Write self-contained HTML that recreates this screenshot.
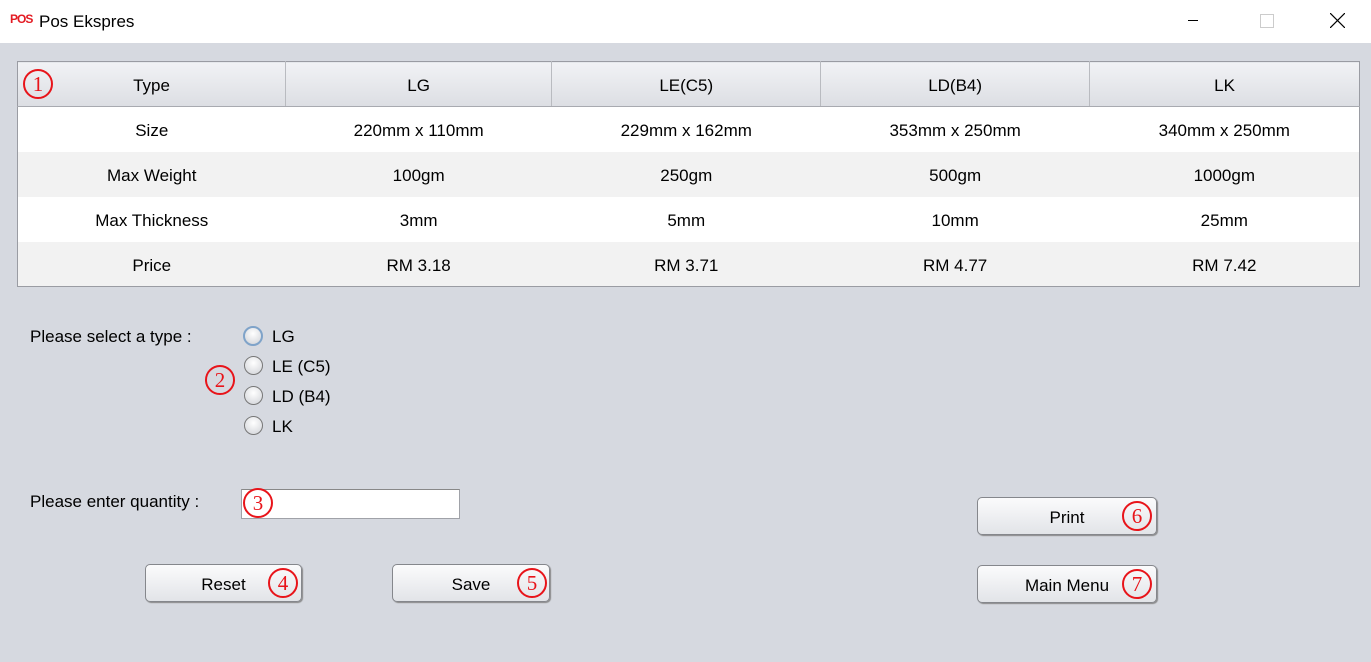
<!DOCTYPE html>
<html><head><style>
body{margin:0;width:1371px;height:662px;background:#d6d9e0;font-family:"Liberation Sans",sans-serif;position:relative;overflow:hidden;font-size:17px;color:#000}
.title{position:absolute;left:0;top:0;width:1371px;height:43px;background:#fff}
.abs{position:absolute}
table{position:absolute;left:17px;top:61px;border-collapse:collapse;border:1px solid #9a9ca3;width:1343px;background:#fff}
td,th{text-align:center;font-weight:normal;height:45px;padding:4px 0 0 0;font-size:17px;box-sizing:border-box}
th{background:linear-gradient(#f1f2f5,#dcdee3);border-right:1px solid #b9bbc0;border-bottom:1px solid #a8aab0;height:45px;padding-top:3px}
tr:nth-child(odd) td{background:#f2f2f2}
.circ{position:absolute;width:26px;height:26px;border:2px solid #e8141a;border-radius:50%;color:#e8141a;font-family:"Liberation Serif",serif;font-size:21px;text-align:center;line-height:27px}
.radio{position:absolute;left:244px;width:17px;height:17px;border-radius:50%;border:1px solid #777;background:radial-gradient(circle at 50% 35%,#fff,#cfd1d6)}
.rl{position:absolute;left:272px}
.btn{position:absolute;border:1px solid #85878c;border-radius:5px;background:linear-gradient(#fbfbfc,#e2e4e8);box-shadow:1px 1px 1px #888;text-align:center;line-height:40px;box-sizing:border-box}
</style></head><body>
<div class="title">
 <div class="abs" style="left:10px;top:12px;color:#e31b23;font-weight:bold;font-size:12px;letter-spacing:-1px">POS</div>
 <div class="abs" style="left:39px;top:12px;font-size:17px">Pos Ekspres</div>
 <div class="abs" style="left:1188px;top:20px;width:10px;height:1px;background:#000"></div>
 <div class="abs" style="left:1260px;top:14px;width:12px;height:12px;border:1px solid #ccc"></div>
 <svg class="abs" style="left:1330px;top:13px" width="15" height="15"><path d="M0 0L15 15M15 0L0 15" stroke="#000" stroke-width="1.2"/></svg>
</div>
<table>
<tr><th style="width:268px">Type</th><th>LG</th><th>LE(C5)</th><th>LD(B4)</th><th style="border-right:0">LK</th></tr>
<tr><td>Size</td><td>220mm x 110mm</td><td>229mm x 162mm</td><td>353mm x 250mm</td><td>340mm x 250mm</td></tr>
<tr><td>Max Weight</td><td>100gm</td><td>250gm</td><td>500gm</td><td>1000gm</td></tr>
<tr><td>Max Thickness</td><td>3mm</td><td>5mm</td><td>10mm</td><td>25mm</td></tr>
<tr><td>Price</td><td>RM 3.18</td><td>RM 3.71</td><td>RM 4.77</td><td>RM 7.42</td></tr>
</table>
<div class="circ" style="left:23px;top:69px">1</div>
<div class="abs" style="left:30px;top:327px">Please select a type :</div>
<div class="radio" style="top:326px;border:2px solid #7fa3c9;width:16px;height:16px;left:243px"></div><div class="rl" style="top:327px">LG</div>
<div class="radio" style="top:356px"></div><div class="rl" style="top:357px">LE (C5)</div>
<div class="radio" style="top:386px"></div><div class="rl" style="top:387px">LD (B4)</div>
<div class="radio" style="top:416px"></div><div class="rl" style="top:417px">LK</div>
<div class="circ" style="left:205px;top:365px">2</div>
<div class="abs" style="left:30px;top:492px">Please enter quantity :</div>
<div class="abs" style="left:241px;top:489px;width:217px;height:28px;background:#fff;border:1px solid #a0a2a8;border-top-color:#888"></div>
<div class="circ" style="left:243px;top:488px">3</div>
<div class="btn" style="left:145px;top:564px;width:157px;height:38px">Reset</div>
<div class="circ" style="left:268px;top:568px">4</div>
<div class="btn" style="left:392px;top:564px;width:158px;height:38px">Save</div>
<div class="circ" style="left:517px;top:568px">5</div>
<div class="btn" style="left:977px;top:497px;width:180px;height:38px">Print</div>
<div class="circ" style="left:1122px;top:501px">6</div>
<div class="btn" style="left:977px;top:565px;width:180px;height:38px">Main Menu</div>
<div class="circ" style="left:1122px;top:569px">7</div>
</body></html>
